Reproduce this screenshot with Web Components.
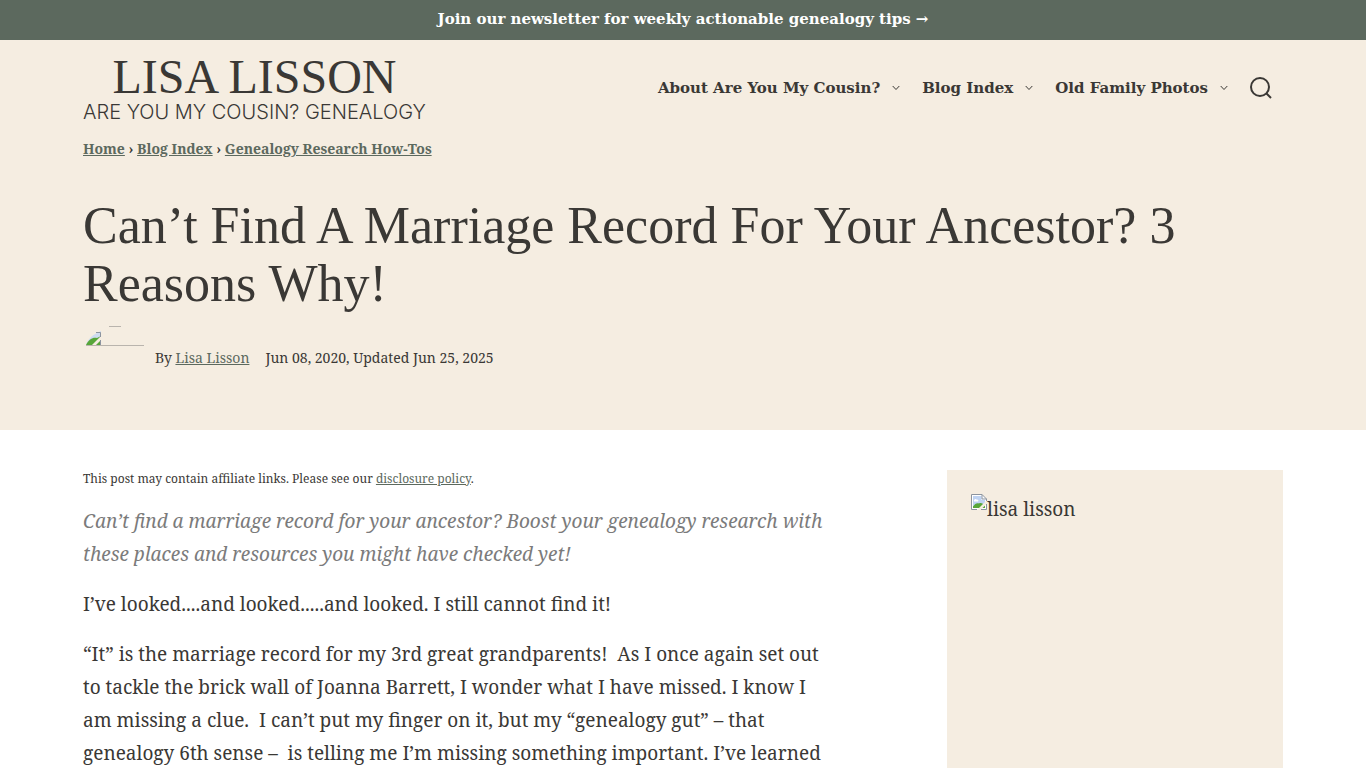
<!DOCTYPE html>
<html lang="en">
<head>
<meta charset="utf-8">
<meta name="viewport" content="width=device-width, initial-scale=1">
<title>Can’t Find A Marriage Record For Your Ancestor? 3 Reasons Why!</title>
<style>
:root {
  --green: #5c695e;
  --sand: #f5ede1;
  --ink: #3a3835;
  --muted: #7b7b7b;
  --serif: "Noto Serif", "DejaVu Serif Condensed", serif;
  --strong: "DejaVu Serif", serif;
}
body { margin: 0; background: #fff; color: var(--ink); font: 19px/33px var(--serif); }
</style>
</head>
<body>
<blog-page>
  <promo-bar slot="promo" href="#newsletter">Join our newsletter for weekly actionable genealogy tips →</promo-bar>
  <site-header slot="header">
    <site-logo slot="logo"></site-logo>
    <nav-item href="#about">About Are You My Cousin?</nav-item>
    <nav-item href="#blog">Blog Index</nav-item>
    <nav-item href="#photos">Old Family Photos</nav-item>
  </site-header>
  <post-intro slot="intro">Can’t Find A Marriage Record For Your Ancestor? 3 Reasons Why!</post-intro>
  <post-body slot="main"></post-body>
  <side-card slot="side"></side-card>
</blog-page>

<template id="broken-image">
  <svg width="16" height="16" viewBox="0 0 16 16" aria-hidden="true">
    <path d="M.5.5H11L15.500 5V15.500H.5Z" fill="#fff"/>
    <path d="M2 2H10.500V6H14V14H2Z" fill="#bfd3f2"/>
    <path d="M3 6.500C3 5 5 4.500 5.500 5.500C7 5 8 6.500 7 7.500H3Z" fill="#fff"/>
    <path d="M2 14V12.500C4 9.500 6 8.500 8 9.500C10 8.500 12 9.500 14 12V14Z" fill="#57a639"/>
    <path d="M6 16L16 6V9.500L9.500 16Z" fill="var(--sand)"/>
    <path d="M6 15.500H.5V.5H11L15.500 5V7M11 .5V5H15.500M10 15.500H15.500V10" fill="none" stroke="#8c949f"/>
  </svg>
</template>

<script>
const brokenImage = document.getElementById('broken-image').innerHTML;

function define(name, render) {
  customElements.define(name, class extends HTMLElement {
    constructor() {
      super();
      this.attachShadow({ mode: 'open' });
    }
    connectedCallback() {
      this.shadowRoot.innerHTML = render(this);
    }
  });
}

define('blog-page', () => `
  <style>
    :host { display: flex; flex-direction: column; min-height: 100vh; }
    .hero { background: var(--sand); padding-bottom: 40px; }
    .wrap { width: 100%; max-width: 1200px; margin: 0 auto; box-sizing: border-box; }
    .content { flex: 1; display: grid; grid-template-columns: minmax(0, 1fr) 336px; gap: 120px; padding-top: 40px; }
    @media (max-width: 1240px) {
      .wrap { padding-left: 20px; padding-right: 20px; }
      .content { gap: 40px; }
    }
    @media (max-width: 900px) { .content { grid-template-columns: 1fr; } }
  </style>
  <slot name="promo"></slot>
  <div class="hero">
    <div class="wrap"><slot name="header"></slot><slot name="intro"></slot></div>
  </div>
  <div class="wrap content"><slot name="main"></slot><slot name="side"></slot></div>
`);

define('promo-bar', el => `
  <style>
    :host { display: block; background: var(--green); text-align: center; padding: 8px 16px 10px; }
    a { display: block; color: #fff; text-decoration: none; font: bold 15px/22px var(--strong); }
  </style>
  <a href="${el.getAttribute('href')}"><slot></slot></a>
`);

define('site-header', () => `
  <style>
    :host { display: block; }
    header { display: flex; flex-wrap: wrap; justify-content: space-between; align-items: center; min-height: 80px; padding: 8px 0 10px; }
    nav { display: flex; flex-wrap: wrap; align-items: center; gap: 22px; padding-right: 11px; }
    .search { display: block; padding: 0; border: 0; background: none; color: var(--ink); cursor: pointer; }
    .search svg { display: block; }
  </style>
  <header>
    <slot name="logo"></slot>
    <nav aria-label="Main">
      <slot></slot>
      <button class="search" type="button" aria-label="Search">
        <svg width="22" height="22" viewBox="0 0 22 22" fill="none" stroke="currentColor" stroke-width="2">
          <circle cx="10" cy="10" r="9"/><path d="M16.500 16.500L21 21"/>
        </svg>
      </button>
    </nav>
  </header>
`);

define('site-logo', () => `
  <style>
    :host { display: block; }
    a { display: flex; flex-direction: column; align-items: center; padding-top: 4px; color: var(--ink); text-decoration: none; white-space: nowrap; }
    .name { font: 48px/44px "Liberation Serif", serif; }
    .tag { font: 300 20px/26px Inter, sans-serif; }
  </style>
  <a href="#home"><span class="name">LISA LISSON</span><span class="tag">ARE YOU MY COUSIN? GENEALOGY</span></a>
`);

define('nav-item', el => `
  <style>
    :host { display: flex; align-items: center; gap: 12px; }
    a { color: var(--ink); text-decoration: none; font: bold 15px/24px var(--strong); }
    button { display: block; padding: 0; border: 0; background: none; color: var(--ink); cursor: pointer; }
    svg { display: block; }
  </style>
  <a href="${el.getAttribute('href')}"><slot></slot></a>
  <button type="button" aria-label="Open submenu">
    <svg width="8" height="6" viewBox="0 0 8 6" fill="none" stroke="currentColor"><path d="M.7 1L4 4.500L7.300 1"/></svg>
  </button>
`);

define('post-intro', () => `
  <style>
    :host { display: block; }
    a { color: var(--green); }
    .crumbs { font: bold 14px/22px var(--serif); }
    h1 { margin: 37px 0 13px; font: 52px/58px "Liberation Serif", serif; }
    .byline { display: flex; align-items: center; gap: 8px; font: 14px/22px var(--serif); }
    .avatar { width: 64px; height: 64px; flex: none; }
    .avatar svg { display: block; }
    .date { margin-left: 8px; }
  </style>
  <nav class="crumbs" aria-label="Breadcrumb"><a href="#home">Home</a> › <a href="#blog">Blog Index</a> › <a href="#how-tos">Genealogy Research How-Tos</a></nav>
  <h1><slot></slot></h1>
  <div class="byline">
    <div class="avatar">
      <svg width="64" height="20" viewBox="0 0 64 20" fill="none" aria-hidden="true">
        <path d="M3 19C5 13 9 9 18 5V19Z" fill="#cfdcf0"/>
        <path d="M3 19C6 13 10 11 14 12L18 10V19Z" fill="#57a639"/>
        <path d="M9 19L18 10V14L13 19Z" fill="var(--sand)"/>
        <path d="M13 6.500H17.500V11M17.500 14V19" stroke="#8c949f"/>
        <path d="M26 .5H38M3 19.500H61" stroke="#b9b4ad"/>
      </svg>
    </div>
    <span>By <a href="#author">Lisa Lisson</a></span>
    <span class="date">Jun 08, 2020, Updated Jun 25, 2025</span>
  </div>
`);

define('post-body', () => `
  <style>
    :host { display: block; }
    p { margin: 0 0 17px; }
    a { color: var(--green); }
    .notice { font-size: 12px; line-height: 18px; }
    .lead { color: var(--muted); font-style: italic; }
  </style>
  <article>
    <p class="notice">This post may contain affiliate links. Please see our <a href="#disclosure">disclosure policy</a>.</p>
    <p class="lead">Can’t find a marriage record for your ancestor? Boost your genealogy research with these places and resources you might have checked yet!</p>
    <p>I’ve looked....and looked.....and looked. I still cannot find it!</p>
    <p>“It” is the marriage record for my 3rd great grandparents!&nbsp; As I once again set out to tackle the brick wall of Joanna Barrett, I wonder what I have missed. I know I am missing a clue.&nbsp; I can’t put my finger on it, but my “genealogy gut” – that genealogy 6th sense –&nbsp; is telling me I’m missing something important. I’ve learned</p>
  </article>
`);

define('side-card', () => `
  <style>
    :host { display: block; background: var(--sand); padding: 24px; }
    .photo { display: flex; align-items: flex-start; line-height: 30px; }
    svg { display: block; flex: none; }
  </style>
  <aside><div class="photo">${brokenImage}<span>lisa lisson</span></div></aside>
`);
</script>
</body>
</html>
